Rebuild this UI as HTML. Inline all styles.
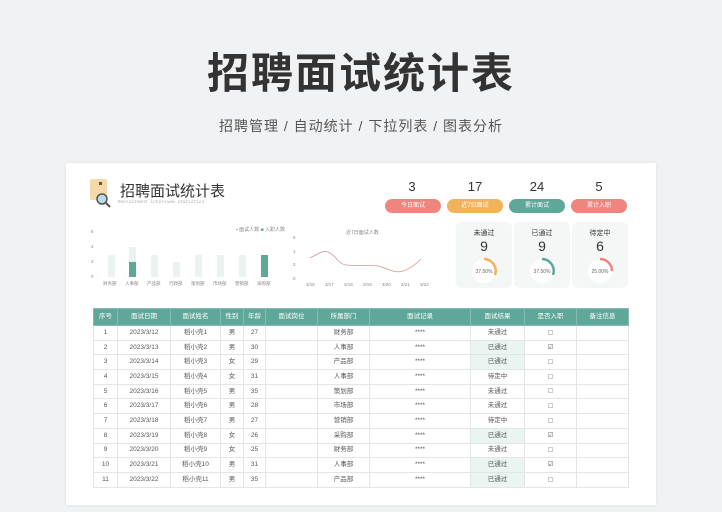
<!DOCTYPE html><html><head><meta charset="utf-8"><style>
*{margin:0;padding:0;box-sizing:border-box}
body{width:722px;height:512px;background:#f1f2f4;font-family:"Liberation Sans","Noto Sans CJK SC",sans-serif;position:relative;overflow:hidden;color:#333}
.a{position:absolute}
.t1{left:0;width:722px;top:40px;text-align:center;font-size:42px;font-weight:bold;color:#333;letter-spacing:2px}
.t2{left:0;width:722px;top:116px;text-align:center;font-size:14px;color:#555;letter-spacing:1px}
.card{left:66px;top:163px;width:590px;height:342px;background:#fff;box-shadow:0 0 4px rgba(0,0,0,.08)}
.num{font-size:13px;color:#333;text-align:center;width:60px}
.pill{width:56px;height:14px;border-radius:7px;color:#fff;font-size:6px;text-align:center;line-height:14px}
.box{background:#f3f8f7;border-radius:6px;width:56px;height:66px;top:222px;text-align:center;font-size:7px}
table{position:absolute;left:93px;top:308px;border-collapse:collapse;font-size:6.5px;color:#555;table-layout:fixed}
td,th{border:1px solid #e3e6e6;text-align:center;height:14.7px;padding:0;line-height:8px;vertical-align:middle}
th{background:#5fa899;color:#fff;font-weight:normal;height:17px;border-color:#86bdb2}
td.g{background:#eaf4f1}
.cb{display:inline-block;width:5px;height:5px;border:1px solid #ccc;vertical-align:middle}
</style></head><body>
<div class="a t1">招聘面试统计表</div>
<div class="a t2">招聘管理 / 自动统计 / 下拉列表 / 图表分析</div>
<div class="a card"></div>
<svg class="a" style="left:88px;top:178px" width="26" height="30"><rect x="2" y="1" width="17" height="21" rx="2" fill="#f6d9a8"/><rect x="11" y="4" width="3" height="3" fill="#555"/><circle cx="14" cy="21" r="5" fill="#b9dbe8" stroke="#555" stroke-width="1.5"/><line x1="18" y1="25" x2="22" y2="29" stroke="#555" stroke-width="2"/></svg>
<div class="a" style="left:120px;top:180px;font-size:15px;color:#333">招聘面试统计表</div>
<div class="a" style="left:118px;top:200px;font-size:4.5px;color:#aaa;font-family:'Liberation Mono',monospace">Recruitment interview statistics</div>
<div class="a num" style="left:382px;top:179px">3</div>
<div class="a num" style="left:445px;top:179px">17</div>
<div class="a num" style="left:507px;top:179px">24</div>
<div class="a num" style="left:569px;top:179px">5</div>
<div class="a pill" style="left:385px;top:199px;background:#ef857f">今日面试</div>
<div class="a pill" style="left:447px;top:199px;background:#f2b25c">近7日面试</div>
<div class="a pill" style="left:509px;top:199px;background:#5fa899">累计面试</div>
<div class="a pill" style="left:571px;top:199px;background:#ef857f">累计入职</div>
<svg class="a" style="left:86px;top:222px" width="200" height="66" font-size="4.5" fill="#888">
<text x="5" y="11">6</text><text x="5" y="26">4</text><text x="5" y="41">2</text><text x="5" y="56">0</text>
<text x="150" y="9" font-size="5">▪ 面试人数 <tspan fill="#5fa899">■</tspan> 入职人数</text>
<g fill="#eaf3f0">
<rect x="22" y="33" width="7" height="22"/><rect x="43" y="25" width="7" height="30"/><rect x="65" y="33" width="7" height="22"/><rect x="87" y="40" width="7" height="15"/><rect x="109" y="33" width="7" height="22"/><rect x="131" y="33" width="7" height="22"/><rect x="153" y="33" width="7" height="22"/><rect x="175" y="33" width="7" height="22"/></g>
<rect x="43" y="40" width="7" height="15" fill="#5fa899"/><rect x="175" y="33" width="7" height="22" fill="#5fa899"/>
<text x="17" y="63">财务部</text><text x="39" y="63">人事部</text><text x="61" y="63">产品部</text><text x="83" y="63">行政部</text><text x="105" y="63">策划部</text><text x="127" y="63">市场部</text><text x="149" y="63">营销部</text><text x="171" y="63">采购部</text>
</svg>
<svg class="a" style="left:288px;top:222px" width="155" height="66" font-size="4.5" fill="#888">
<text x="58" y="12" font-size="5">近7日面试人数</text>
<text x="5" y="17">6</text><text x="5" y="31">4</text><text x="5" y="44">2</text><text x="5" y="58">0</text>
<path d="M22 36 C30 32,35 28,40 30 C48 33,50 42,58 43 C70 44,80 43,90 44 C100 46,105 52,115 49 C122 47,128 42,133 37" fill="none" stroke="#d99494" stroke-width=".8"/>
<text x="18" y="64">3/16</text><text x="37" y="64">3/17</text><text x="56" y="64">3/18</text><text x="75" y="64">3/19</text><text x="94" y="64">3/20</text><text x="113" y="64">3/21</text><text x="132" y="64">3/22</text>
</svg>
<div class="a box" style="left:456px">
<div style="margin-top:6px">未通过</div><div style="font-size:14px">9</div>
<svg width="40" height="30"><circle cx="20" cy="17" r="12" fill="#fff"/><path d="M20 5 A12 12 0 0 1 31 21" fill="none" stroke="#f2b25c" stroke-width="2.5"/><text x="20" y="19" font-size="5" text-anchor="middle" fill="#666">37.50%</text></svg></div>
<div class="a box" style="left:514px">
<div style="margin-top:6px">已通过</div><div style="font-size:14px">9</div>
<svg width="40" height="30"><circle cx="20" cy="17" r="12" fill="#fff"/><path d="M20 5 A12 12 0 0 1 31 21" fill="none" stroke="#5fa899" stroke-width="2.5"/><text x="20" y="19" font-size="5" text-anchor="middle" fill="#666">37.50%</text></svg></div>
<div class="a box" style="left:572px">
<div style="margin-top:6px">待定中</div><div style="font-size:14px">6</div>
<svg width="40" height="30"><circle cx="20" cy="17" r="12" fill="#fff"/><path d="M20 5 A12 12 0 0 1 32 17" fill="none" stroke="#ef857f" stroke-width="2.5"/><text x="20" y="19" font-size="5" text-anchor="middle" fill="#666">25.00%</text></svg></div>
<table>
<colgroup><col style="width:24px"><col style="width:53px"><col style="width:50px"><col style="width:23px"><col style="width:22px"><col style="width:52px"><col style="width:52px"><col style="width:101px"><col style="width:54px"><col style="width:52px"><col style="width:52px"></colgroup>
<tr><th>序号</th><th>面试日期</th><th>面试姓名</th><th>性别</th><th>年龄</th><th>面试岗位</th><th>所属部门</th><th>面试记录</th><th>面试结果</th><th>是否入职</th><th>备注信息</th></tr>
<tr><td>1</td><td>2023/3/12</td><td>稻小壳1</td><td>男</td><td>27</td><td></td><td>财务部</td><td>****</td><td>未通过</td><td><span class="cb"></span></td><td></td></tr>
<tr><td>2</td><td>2023/3/13</td><td>稻小壳2</td><td>男</td><td>30</td><td></td><td>人事部</td><td>****</td><td class="g">已通过</td><td>☑</td><td></td></tr>
<tr><td>3</td><td>2023/3/14</td><td>稻小壳3</td><td>女</td><td>29</td><td></td><td>产品部</td><td>****</td><td class="g">已通过</td><td><span class="cb"></span></td><td></td></tr>
<tr><td>4</td><td>2023/3/15</td><td>稻小壳4</td><td>女</td><td>31</td><td></td><td>人事部</td><td>****</td><td>待定中</td><td><span class="cb"></span></td><td></td></tr>
<tr><td>5</td><td>2023/3/16</td><td>稻小壳5</td><td>男</td><td>35</td><td></td><td>策划部</td><td>****</td><td>未通过</td><td><span class="cb"></span></td><td></td></tr>
<tr><td>6</td><td>2023/3/17</td><td>稻小壳6</td><td>男</td><td>28</td><td></td><td>市场部</td><td>****</td><td>未通过</td><td><span class="cb"></span></td><td></td></tr>
<tr><td>7</td><td>2023/3/18</td><td>稻小壳7</td><td>男</td><td>27</td><td></td><td>营销部</td><td>****</td><td>待定中</td><td><span class="cb"></span></td><td></td></tr>
<tr><td>8</td><td>2023/3/19</td><td>稻小壳8</td><td>女</td><td>26</td><td></td><td>采购部</td><td>****</td><td class="g">已通过</td><td>☑</td><td></td></tr>
<tr><td>9</td><td>2023/3/20</td><td>稻小壳9</td><td>女</td><td>25</td><td></td><td>财务部</td><td>****</td><td>未通过</td><td><span class="cb"></span></td><td></td></tr>
<tr><td>10</td><td>2023/3/21</td><td>稻小壳10</td><td>男</td><td>31</td><td></td><td>人事部</td><td>****</td><td class="g">已通过</td><td>☑</td><td></td></tr>
<tr><td>11</td><td>2023/3/22</td><td>稻小壳11</td><td>男</td><td>35</td><td></td><td>产品部</td><td>****</td><td class="g">已通过</td><td><span class="cb"></span></td><td></td></tr>
</table>
</body></html>
